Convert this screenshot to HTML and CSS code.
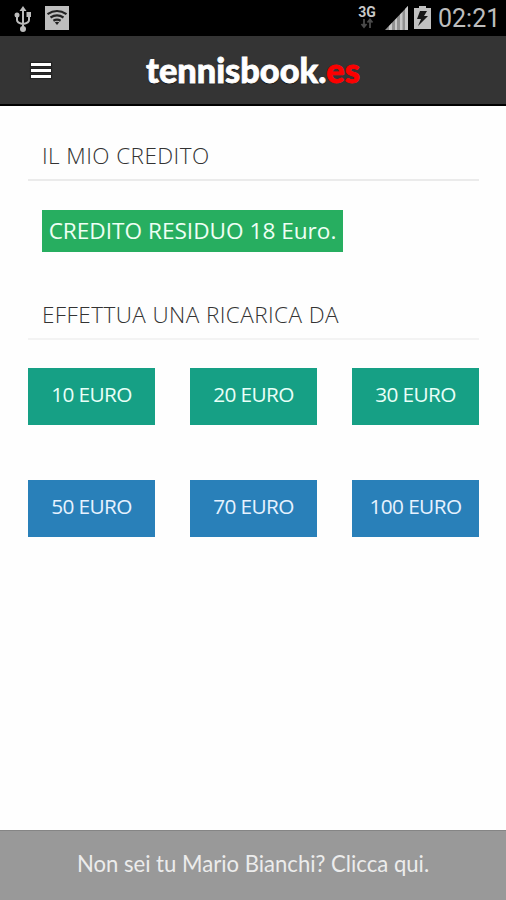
FILE: index.html
```html
<!DOCTYPE html>
<html lang="it">
<head>
<meta charset="utf-8">
<title>tennisbook.es</title>
<link rel="stylesheet" href="styles.css">
</head>
<body>
<div class="status">
  <svg class="usb" width="18" height="28" viewBox="0 0 18 28" fill="none" stroke="#bcbcbc" stroke-width="2">
    <path d="M9 4v18M3 10v4q0 3 6 4M15 9v5q0 3-6 4"/>
    <path d="M9 0l3.500 5h-7z" fill="#bcbcbc" stroke="none"/>
    <circle cx="9" cy="23" r="3" fill="#bcbcbc" stroke="none"/>
    <circle cx="3" cy="9" r="2.500" fill="#bcbcbc" stroke="none"/>
    <path d="M12.500 6h4.500v5h-4.500z" fill="#bcbcbc" stroke="none"/>
  </svg>
  <svg class="wifi" width="24" height="24" viewBox="0 0 24 24">
    <path fill="#bebebe" d="M0 0h24v24H0z"/>
    <path fill="none" stroke="#222" stroke-width="2.200" d="M2.500 8.200q9.500-6.400 19 0M5.500 11.500q6.500-4.200 13 0M8.400 14.700q3.600-2.300 7.200 0"/>
    <path fill="#222" d="M9.800 16.300q2.200-1 4.400 0L12 19z"/>
  </svg>
  <div class="network">
    <span>3G</span>
    <svg width="14" height="11" viewBox="0 0 14 11" fill="none" stroke="#4a4a4a" stroke-width="1.800"><path d="M4 1v8M1.500 6L4 9l2.500-3M10 10V2M7.500 4.500L10 1.500l2.500 3"/></svg>
  </div>
  <svg class="signal" width="23" height="24" viewBox="0 0 23 24">
    <path fill="#929292" d="M0 24L23 0v24z"/>
    <path fill="#c8c8c8" d="M4 24v-4l3-3v7zM10 24V14l2-2v12zM15 24V8.500L17.500 6v18zM20 24V3l3-3v24z"/>
  </svg>
  <svg class="battery" width="17" height="23" viewBox="0 0 17 23">
    <path fill="#c0c0c0" d="M0 2h5V0h7v2h5v21H0z"/>
    <path fill="#161616" d="M6 5h7l-3 5h4L4 20l3-7H3z"/>
  </svg>
  <time class="clock">02:21</time>
</div>
<header class="bar">
  <div class="menu"><i></i><i></i><i></i></div>
  <h1 class="logo">tennisbook.<span>es</span></h1>
</header>
<main class="content">
  <h2 class="title">IL MIO CREDITO</h2>
  <div class="credit">CREDITO RESIDUO 18 Euro.</div>
  <h2 class="title recharge">EFFETTUA UNA RICARICA DA</h2>
  <div class="amounts">
    <a class="amount">10 EURO</a>
    <a class="amount">20 EURO</a>
    <a class="amount">30 EURO</a>
    <a class="amount blue">50 EURO</a>
    <a class="amount blue">70 EURO</a>
    <a class="amount blue">100 EURO</a>
  </div>
</main>
<footer class="footer">Non sei tu Mario Bianchi? Clicca qui.</footer>
</body>
</html>
```

FILE: styles.css
```css
* { box-sizing: border-box; }
body {
  margin: 0;
  height: 900px;
  display: flex;
  flex-direction: column;
  background: #fefefe;
  font-family: "Open Sans", sans-serif;
  overflow: hidden;
}
.status {
  height: 36px;
  display: flex;
  align-items: flex-start;
  padding: 6px 7px 0 14px;
  background: #000;
}
.wifi { margin-left: 13px; }
.network {
  width: 20px;
  margin-left: auto;
  display: flex;
  flex-direction: column;
  align-items: center;
  font: 700 14px/12px Roboto, sans-serif;
  color: #c8c8c8;
}
.signal { margin-left: 8px; }
.battery { margin-left: 6px; }
.clock {
  margin-left: 7px;
  width: 61px;
  font: 400 25px/25px Roboto, sans-serif;
  color: #bdbdbd;
  white-space: nowrap;
}
.bar {
  height: 70px;
  display: grid;
  grid-template-columns: 80px 1fr 80px;
  align-items: center;
  background: #343434;
  border-bottom: 2px solid #000;
}
.menu {
  width: 20px;
  margin: 0 0 0 31px;
  display: grid;
  gap: 3px;
}
.menu i { height: 3px; background: #fff; box-shadow: 0 0 1px 1px #222; }
.logo {
  margin: 0;
  font: 900 34.3px/40px Lato, sans-serif;
  color: #fff;
  text-align: center;
  text-shadow: 0 1px 1px #000;
  -webkit-text-stroke: 0.8px currentColor;
  white-space: nowrap;
}
.logo span { color: #fc0000; text-shadow: none; }
.content {
  flex: 1;
  padding: 30px 27px 0 28px;
}
.title {
  margin: 0;
  height: 45px;
  padding-left: 14px;
  border-bottom: 2px solid #ebebeb;
  font-size: 22.5px;
  font-weight: 300;
  letter-spacing: 0.43px;
  line-height: 39px;
  color: #333;
  white-space: nowrap;
}
.credit {
  width: 301px;
  height: 42px;
  margin: 29px 0 0 14px;
  background: #27ae60;
  color: #eefff4;
  font-size: 22.6px;
  line-height: 41px;
  text-align: center;
  white-space: nowrap;
}
.recharge { margin-top: 43px; border-color: #f3f3f3; }
.amounts {
  margin-top: 28px;
  display: grid;
  grid-template-columns: repeat(3, 127px);
  justify-content: space-between;
  row-gap: 56px;
}
.amount {
  height: 57px;
  margin-bottom: -1px;
  background: #16a085;
  color: #e8fff8;
  font-size: 20.8px;
  letter-spacing: -0.6px;
  line-height: 53px;
  text-align: center;
  white-space: nowrap;
}
.blue { background: #2980b9; color: #e6f2ff; }
.footer {
  height: 70px;
  background: #999;
  border-top: 1px solid #858585;
  color: #ececec;
  font: 400 22.1px/66px Lato, sans-serif;
  text-align: center;
}
```
